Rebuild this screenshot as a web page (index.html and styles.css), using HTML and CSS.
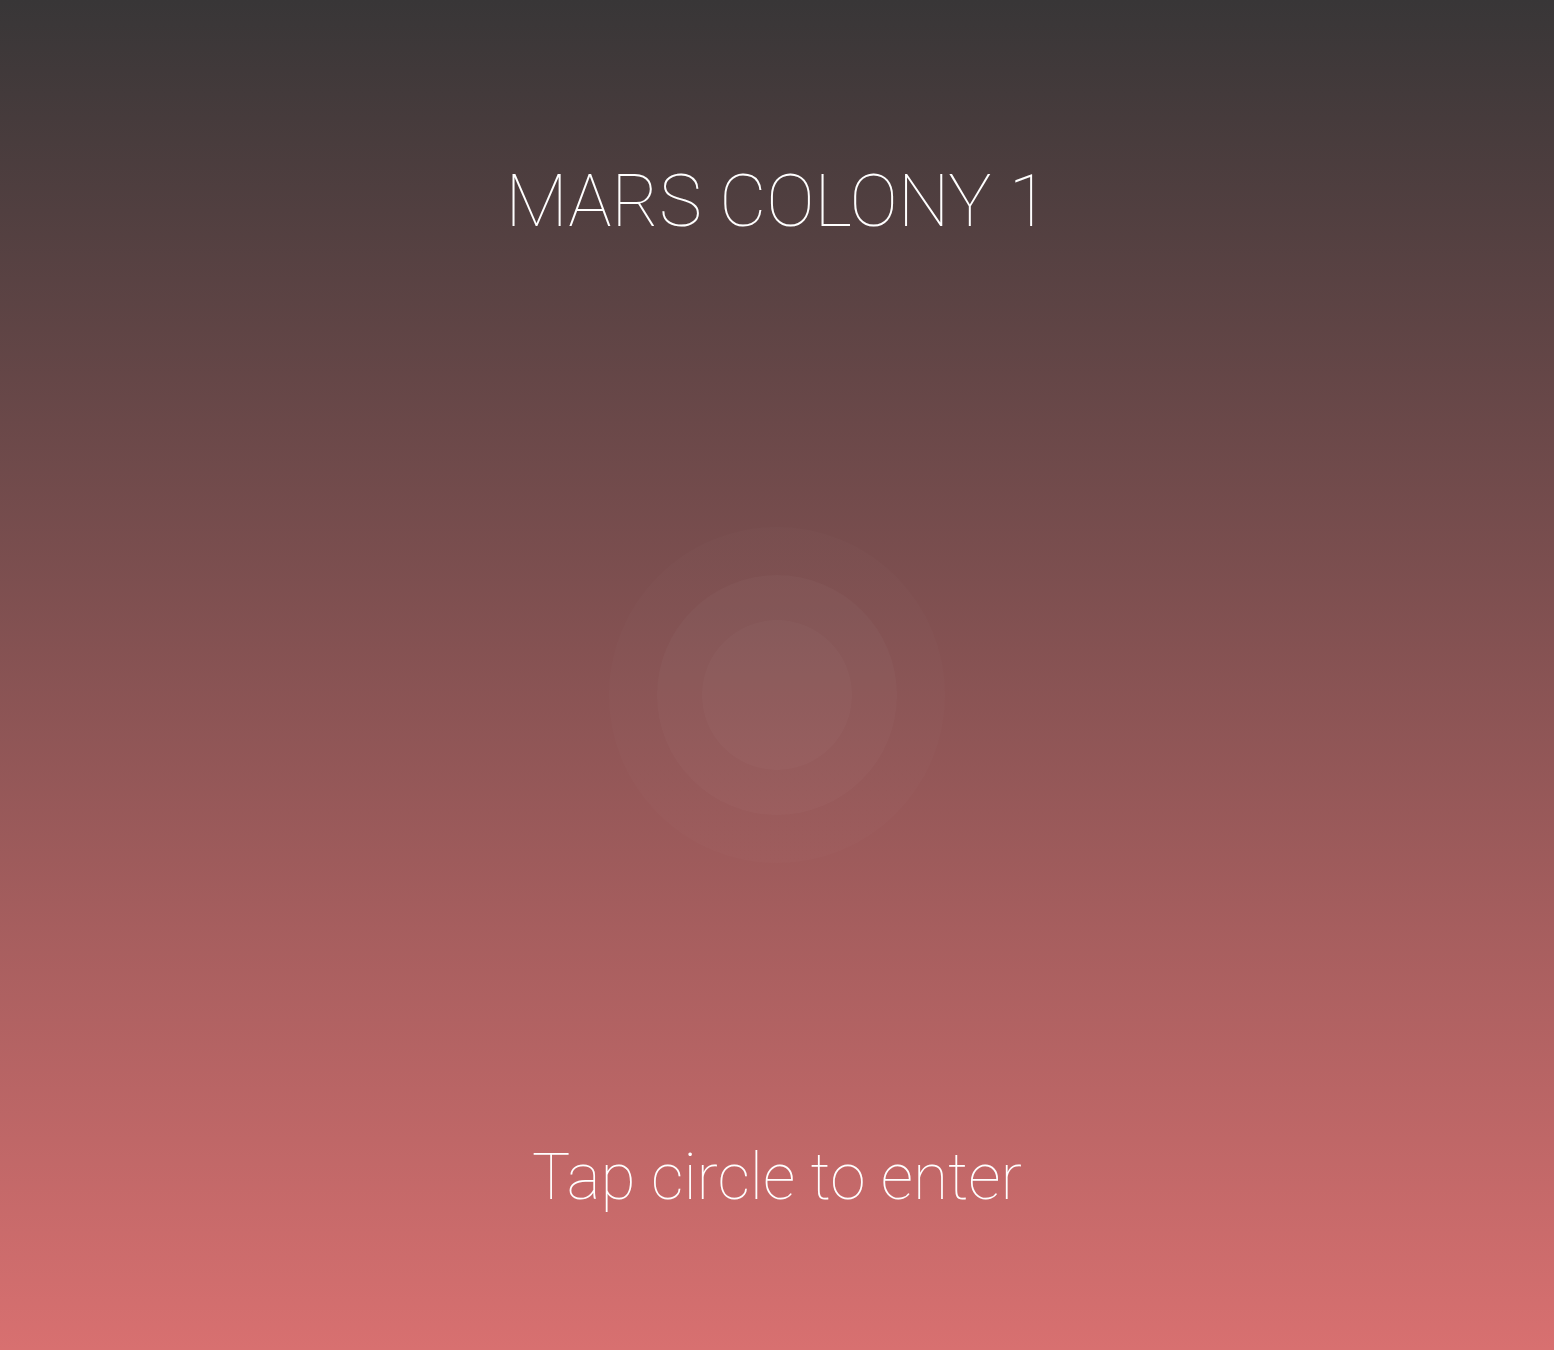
FILE: index.html
```html
<!DOCTYPE html>
<html lang="en">
<head>
<meta charset="utf-8">
<title>Mars Colony 1</title>
<link rel="stylesheet" href="styles.css">
</head>
<body>
<main class="screen">
  <h1 class="title">MARS COLONY 1</h1>
  <div class="portal">
    <div class="ring ring-outer">
      <div class="ring ring-middle">
        <div class="ring ring-inner"></div>
      </div>
    </div>
  </div>
  <p class="hint">Tap circle to enter</p>
</main>
</body>
</html>
```
FILE: styles.css
```css
html, body {
  margin: 0;
  padding: 0;
}
body {
  font-family: Roboto, "Liberation Sans", sans-serif;
  color: #ffffff;
}
.screen {
  height: 1350px;
  box-sizing: border-box;
  display: flex;
  flex-direction: column;
  align-items: center;
  background: linear-gradient(to bottom, #383637 0%, #d87070 100%);
  padding-top: 158px;
}
.title {
  margin: 0;
  font-weight: 100;
  font-size: 72.5px;
  line-height: 88px;
  letter-spacing: 0;
}
.portal {
  margin-top: 281px;
  width: 336px;
  height: 336px;
  display: flex;
  align-items: center;
  justify-content: center;
}
.ring {
  border-radius: 50%;
  display: flex;
  align-items: center;
  justify-content: center;
}
.ring-outer {
  width: 336px;
  height: 336px;
  background: radial-gradient(circle, rgba(255,255,255,0.012) 0%, rgba(255,255,255,0.01) 75%, rgba(255,255,255,0.002) 100%);
}
.ring-middle {
  width: 240px;
  height: 240px;
  background: rgba(255,255,255,0.022);
}
.ring-inner {
  width: 150px;
  height: 150px;
  background: rgba(255,255,255,0.022);
}
.hint {
  margin: 277px 0 0;
  font-weight: 100;
  font-size: 64px;
  line-height: 76px;
}
```
